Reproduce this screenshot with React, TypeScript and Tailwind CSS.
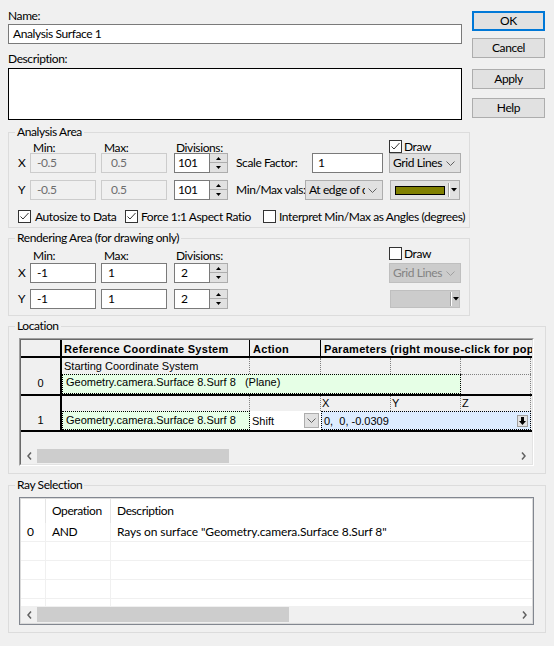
import React from 'react';

const dlg = "font-['Lato','Noto_Sans',sans-serif] tracking-[-0.4px]";
const arial = "font-['Liberation_Sans',Arial,sans-serif] text-[11px] tracking-normal";

function CheckBox({ checked = false }: { checked?: boolean }) {
  return (
    <span className="inline-flex w-[13px] h-[13px] shrink-0 items-center justify-center border border-[#333333] bg-white">
      {checked && (
        <svg width="11" height="11" viewBox="0 0 11 11">
          <path d="M1.5 5.5 L4 8 L9.5 2" fill="none" stroke="#333333" strokeWidth="1" />
        </svg>
      )}
    </span>
  );
}

function Chevron({ color = '#606060' }: { color?: string }) {
  return (
    <svg width="9" height="5" viewBox="0 0 9 5">
      <polyline points="0.5,0.5 4.5,4.5 8.5,0.5" fill="none" stroke={color} strokeWidth="1" />
    </svg>
  );
}

function Edit({ value, disabled, className }: { value: string; disabled?: boolean; className: string }) {
  return (
    <div
      className={`h-[20px] shrink-0 overflow-hidden whitespace-nowrap border leading-[18px] ${
        disabled ? 'border-[#cccccc] bg-[#f0f0f0] text-[#6d6d6d]' : 'border-[#7a7a7a] bg-white'
      } ${className}`}
    >
      {value}
    </div>
  );
}

function SpinEdit({ value, pad }: { value: string; pad: string }) {
  return (
    <div className="flex h-[20px] w-[54px] shrink-0">
      <div className={`h-full w-[36px] border border-[#7a7a7a] bg-white leading-[18px] ${pad}`}>{value}</div>
      <div className="flex h-full w-[18px] flex-col border border-l-0 border-[#adadad] bg-[#e1e1e1]">
        <div className="flex h-[9px] items-center justify-center border-b border-[#adadad]">
          <svg width="5" height="3" viewBox="0 0 5 3">
            <polygon points="2.5,0 5,3 0,3" fill="#000" />
          </svg>
        </div>
        <div className="flex flex-1 items-center justify-center">
          <svg width="5" height="3" viewBox="0 0 5 3">
            <polygon points="0,0 5,0 2.5,3" fill="#000" />
          </svg>
        </div>
      </div>
    </div>
  );
}

function Combo({ text, disabled, className }: { text: string; disabled?: boolean; className: string }) {
  return (
    <div
      className={`flex h-[20px] shrink-0 items-center border pl-[3px] pr-[5px] ${
        disabled ? 'border-[#bfbfbf] bg-[#cccccc] text-[#838383]' : 'border-[#adadad] bg-[#e1e1e1]'
      } ${className}`}
    >
      <span className="flex-1 overflow-hidden whitespace-nowrap">{text}</span>
      <span className="ml-[3px] flex items-center">
        <Chevron color={disabled ? '#a0a0a0' : '#606060'} />
      </span>
    </div>
  );
}

function ColorCombo({ disabled, className }: { disabled?: boolean; className: string }) {
  return (
    <div
      className={`flex shrink-0 items-center border pl-[4px] ${
        disabled ? 'border-[#bfbfbf] bg-[#cccccc]' : 'border-[#adadad] bg-[#e1e1e1]'
      } ${className}`}
    >
      {disabled ? (
        <div className="h-[9px] w-[52px]" />
      ) : (
        <div className="h-[9px] w-[50px] border border-black bg-[#808000]" />
      )}
      <div className="ml-[3px] h-[14px] w-[2px] border-l border-[#a0a0a0] bg-white" />
      <svg className="ml-[1px]" width="6" height="4" viewBox="0 0 6 4">
        <polygon points="0,0 6,0 3,3.5" fill="#000" />
      </svg>
    </div>
  );
}

function Button({ label, className }: { label: string; className: string }) {
  return (
    <div className={`flex h-[20px] items-center justify-center bg-[#e1e1e1] ${className}`}>{label}</div>
  );
}

function ScrollBar({ thumb, className }: { thumb: string; className: string }) {
  return (
    <div className={`flex shrink-0 bg-[#f0f0f0] ${className}`}>
      <div className="flex w-[16px] items-center justify-center">
        <svg width="5" height="8" viewBox="0 0 5 8">
          <polyline points="4,0.5 1,4 4,7.5" fill="none" stroke="#606060" strokeWidth="1.5" />
        </svg>
      </div>
      <div className={`my-[1px] bg-[#cdcdcd] ${thumb}`} />
      <div className="flex-1" />
      <div className="flex w-[16px] items-center justify-center">
        <svg width="5" height="8" viewBox="0 0 5 8">
          <polyline points="1,0.5 4,4 1,7.5" fill="none" stroke="#606060" strokeWidth="1.5" />
        </svg>
      </div>
    </div>
  );
}

function DropIcon() {
  return (
    <div className="flex h-[12px] w-[11px] items-center justify-center border border-[#a0a0a0] bg-[#e1e1e1]">
      <svg width="7" height="8" viewBox="0 0 7 8">
        <polygon points="2,0 5,0 5,4 7,4 3.5,8 0,4 2,4" fill="#000" />
      </svg>
    </div>
  );
}

export default function App() {
  return (
    <div className={`h-[646px] w-[554px] overflow-hidden bg-[#f0f0f0] text-[12px] leading-[16px] text-black ${dlg}`}>
      <div className="flex pl-[8px]">
        <div className="w-[454px] pt-[8px]">
          <div className="h-[16px]">Name:</div>
          <Edit value="Analysis Surface 1" className="w-full pl-[4px]" />
          <div className="mt-[7px] h-[16px]">Description:</div>
          <div className="mt-[1px] h-[52px] border border-black bg-white" />
        </div>
        <div className="ml-[10px] flex w-[73px] flex-col pt-[11px]">
          <Button label="OK" className="border-2 border-[#0078d7]" />
          <Button label="Cancel" className="mt-[7px] border border-[#adadad]" />
          <Button label="Apply" className="mt-[11px] border border-[#adadad]" />
          <Button label="Help" className="mt-[9px] border border-[#adadad]" />
        </div>
      </div>

      <fieldset className="ml-[8px] mt-[4px] w-[462px] border border-[#dcdcdc]">
        <legend className="ml-[6px] px-[2px]">Analysis Area</legend>
        <div className="pl-[9px]">
          <div className="flex h-[13px]">
            <div className="w-[12px]" />
            <div className="w-[66px] pl-[3px]">Min:</div>
            <div className="ml-[5px] w-[66px] pl-[3px]">Max:</div>
            <div className="ml-[7px] w-[54px] pl-[2px]">Divisions:</div>
            <div className="ml-[161px] flex h-[13px] items-center">
              <CheckBox checked />
              <span className="ml-[2px]">Draw</span>
            </div>
          </div>
          <div className="flex h-[20px] items-center">
            <div className="w-[12px]">X</div>
            <Edit value="-0.5" disabled className="w-[66px] pl-[6px]" />
            <Edit value="0.5" disabled className="ml-[5px] w-[66px] pl-[9px]" />
            <div className="ml-[7px]">
              <SpinEdit value="101" pad="pl-[3px]" />
            </div>
            <div className="ml-[8px] w-[76px] whitespace-nowrap">Scale Factor:</div>
            <Edit value="1" className="w-[71px] pl-[5px]" />
            <Combo text="Grid Lines" className="ml-[6px] w-[72px]" />
          </div>
          <div className="mt-[7px] flex h-[20px] items-center">
            <div className="w-[12px]">Y</div>
            <Edit value="-0.5" disabled className="w-[66px] pl-[6px]" />
            <Edit value="0.5" disabled className="ml-[5px] w-[66px] pl-[9px]" />
            <div className="ml-[7px]">
              <SpinEdit value="101" pad="pl-[3px]" />
            </div>
            <div className="ml-[8px] w-[69px] whitespace-nowrap">Min/Max vals:</div>
            <Combo text="At edge of coordinates" className="w-[78px]" />
            <ColorCombo className="ml-[7px] h-[20px] w-[70px]" />
          </div>
          <div className="mt-[10px] mb-[4px] flex h-[13px] items-center">
            <div className="flex w-[107px] items-center">
              <CheckBox checked />
              <span className="ml-[4px] whitespace-nowrap">Autosize to Data</span>
            </div>
            <div className="flex w-[138px] items-center">
              <CheckBox checked />
              <span className="ml-[3px] whitespace-nowrap">Force 1:1 Aspect Ratio</span>
            </div>
            <div className="flex items-center">
              <CheckBox />
              <span className="ml-[3px] whitespace-nowrap">Interpret Min/Max as Angles (degrees)</span>
            </div>
          </div>
        </div>
      </fieldset>

      <fieldset className="ml-[8px] mt-[2px] w-[462px] border border-[#dcdcdc]">
        <legend className="ml-[6px] px-[2px]">Rendering Area (for drawing only)</legend>
        <div className="pl-[9px]">
          <div className="flex h-[17px] items-start">
            <div className="w-[12px]" />
            <div className="mt-[2px] w-[66px] pl-[3px]">Min:</div>
            <div className="ml-[5px] mt-[2px] w-[66px] pl-[3px]">Max:</div>
            <div className="ml-[7px] mt-[2px] w-[54px] pl-[2px]">Divisions:</div>
            <div className="ml-[161px] mt-[1px] flex h-[13px] items-center">
              <CheckBox />
              <span className="ml-[2px]">Draw</span>
            </div>
          </div>
          <div className="flex h-[20px] items-center">
            <div className="w-[12px]">X</div>
            <Edit value="-1" className="w-[66px] pl-[6px]" />
            <Edit value="1" className="ml-[5px] w-[66px] pl-[6px]" />
            <div className="ml-[7px]">
              <SpinEdit value="2" pad="pl-[6px]" />
            </div>
            <Combo text="Grid Lines" disabled className="ml-[161px] w-[72px]" />
          </div>
          <div className="mb-[6px] mt-[6px] flex h-[20px] items-center">
            <div className="w-[12px]">Y</div>
            <Edit value="-1" className="w-[66px] pl-[6px]" />
            <Edit value="1" className="ml-[5px] w-[66px] pl-[6px]" />
            <div className="ml-[7px]">
              <SpinEdit value="2" pad="pl-[6px]" />
            </div>
            <ColorCombo disabled className="ml-[162px] h-[18px] w-[70px]" />
          </div>
        </div>
      </fieldset>

      <fieldset className="ml-[8px] mt-[2px] w-[538px] border border-[#dcdcdc]">
        <legend className="ml-[6px] px-[2px]">Location</legend>
        <div className="mb-[7px] ml-[10px] mt-[4px] h-[128px] w-[515px] border border-b-white border-l-[#a0a0a0] border-r-white border-t-[#a0a0a0]">
          <div
            className={`flex h-full flex-col overflow-hidden border border-b-[#e3e3e3] border-l-[#696969] border-r-[#e3e3e3] border-t-[#696969] bg-[#f0f0f0] ${arial}`}
          >
            <div className="flex h-[18px] shrink-0 border-b-2 border-black font-bold tracking-[0.3px]">
              <div className="w-[41px] shrink-0 border-r-2 border-black" />
              <div className="w-[188px] shrink-0 border-r border-black pl-[2px] pt-[1px]">Reference Coordinate System</div>
              <div className="w-[71px] shrink-0 border-r border-black pl-[3px] pt-[1px]">Action</div>
              <div className="flex-1 overflow-hidden whitespace-nowrap pl-[3px] pt-[1px]">
                Parameters (right mouse-click for popup menu)
              </div>
            </div>

            <div className="flex shrink-0 border-b-2 border-black">
              <div className="flex w-[41px] shrink-0 items-end justify-center border-r-2 border-black pb-[3px]">0</div>
              <div className="flex w-[469px] flex-col">
                <div className="flex h-[16px]">
                  <div className="w-[188px] border-r border-dotted border-[#808080] pl-[2px]">Starting Coordinate System</div>
                  <div className="w-[71px] border-r border-dotted border-[#808080]" />
                  <div className="w-[70px] border-r border-dotted border-[#808080]" />
                  <div className="w-[70px] border-r border-dotted border-[#808080]" />
                  <div className="w-[70px] border-r border-dotted border-[#808080]" />
                </div>
                <div className="flex h-[20px]">
                  <div className="w-[399px] whitespace-pre border border-dotted border-black bg-[#e6ffe6] pl-[3px] leading-[15px]">
                    {'Geometry.camera.Surface 8.Surf 8   (Plane)'}
                  </div>
                  <div className="w-[70px] border-r border-t border-dotted border-[#808080]" />
                </div>
              </div>
            </div>

            <div className="flex shrink-0 border-b-2 border-black">
              <div className="flex w-[41px] shrink-0 items-end justify-center border-r-2 border-black pb-[2px]">1</div>
              <div className="flex w-[469px] flex-col">
                <div className="flex h-[15px] leading-[15px]">
                  <div className="w-[188px] border-r border-dotted border-[#808080]" />
                  <div className="w-[71px] border-r border-dotted border-[#808080]" />
                  <div className="w-[70px] border-r border-dotted border-[#808080] pl-[1px]">X</div>
                  <div className="w-[70px] border-r border-dotted border-[#808080] pl-[1px]">Y</div>
                  <div className="w-[70px] border-r border-dotted border-[#808080] pl-[1px]">Z</div>
                </div>
                <div className="flex h-[19px]">
                  <div className="w-[188px] whitespace-nowrap border border-dotted border-black bg-[#e6ffe6] pl-[3px] leading-[16px]">
                    Geometry.camera.Surface 8.Surf 8
                  </div>
                  <div className="flex w-[71px] items-center bg-white pl-[2px] pr-[2px]">
                    <span className="flex-1">Shift</span>
                    <div className="flex h-[15px] w-[15px] items-center justify-center border border-[#adadad] bg-[#e1e1e1]">
                      <Chevron />
                    </div>
                  </div>
                  <div className="flex w-[210px] items-center border border-dotted border-black bg-[#ddecff] pl-[2px] pr-[2px]">
                    <span className="flex-1 whitespace-pre">{'0,  0, -0.0309'}</span>
                    <DropIcon />
                  </div>
                </div>
              </div>
            </div>

            <div className="flex-1" />
            <ScrollBar thumb="w-[192px]" className="h-[16px] w-[510px]" />
          </div>
        </div>
      </fieldset>

      <fieldset className="ml-[8px] mt-[3px] w-[538px] border border-[#dcdcdc]">
        <legend className="ml-[6px] px-[2px]">Ray Selection</legend>
        <div className="mb-[7px] ml-[10px] mt-[4px] h-[128px] w-[515px] border border-[#828790]">
          <div className="flex h-full flex-col border border-[#dadada] bg-white">
            <div className="flex h-[24px] shrink-0 items-center">
              <div className="h-full w-[25px] border-r border-[#e5e5e5]" />
              <div className="flex h-full w-[65px] items-center border-r border-[#e5e5e5] pl-[6px]">Operation</div>
              <div className="pl-[6px]">Description</div>
            </div>
            <div className="flex-1 overflow-hidden">
              {[0, 1, 2, 3, 4].map((i) => (
                <div key={i} className="flex h-[19px] items-center border-b border-[#f0f0f0]">
                  <div className="flex h-full w-[25px] items-center border-r border-[#f0f0f0] pl-[6px]">{i === 0 ? '0' : ''}</div>
                  <div className="flex h-full w-[65px] items-center border-r border-[#f0f0f0] pl-[6px]">{i === 0 ? 'AND' : ''}</div>
                  <div className="pl-[6px] tracking-[-0.1px]">
                    {i === 0 ? 'Rays on surface "Geometry.camera.Surface 8.Surf 8"' : ''}
                  </div>
                </div>
              ))}
            </div>
            <ScrollBar thumb="w-[252px]" className="h-[17px] w-full" />
          </div>
        </div>
      </fieldset>
    </div>
  );
}
